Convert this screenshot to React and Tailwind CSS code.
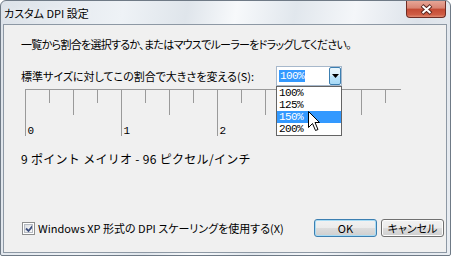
import React from "react";

const jp = "font-['Noto_Sans_CJK_JP',sans-serif] [font-feature-settings:'palt']";
const mono = "font-['Liberation_Mono',monospace]";

// ruler ticks every 24px, half marks every 48px, numbered marks every 96px
const ticks = Array.from({ length: 16 }, (_, k) => k);

const Ruler = () => (
  <svg width="377" height="47" className="block">
    <line x1="0" y1="0.5" x2="376" y2="0.5" stroke="#9a9a9a" />
    {ticks.map((k) => {
      const x = k * 24 + 0.5;
      const len = k % 4 === 0 ? 47 : k % 2 === 0 ? 26 : 14;
      return <line key={k} x1={x} y1="0" x2={x} y2={len} stroke="#9a9a9a" />;
    })}
    {["0", "1", "2", "3"].map((n, i) => (
      <text
        key={n}
        x={i * 96 + 2.5}
        y="44.5"
        fontSize="11"
        fontFamily="Liberation Mono, monospace"
        fill="#000">
        {n}
      </text>
    ))}
  </svg>
);

const Cursor = () => (
  <svg width="13" height="21" className="block">
    <path
      d="M0.5 0.5 L0.5 16.5 L4.5 12.5 L7.5 19.5 L10 18.5 L7 11.5 L11.5 11.5 Z"
      fill="#fff"
      stroke="#000"
      strokeLinejoin="miter"
    />
  </svg>
);

const CloseButton = () => (
  <div className="w-[40px] h-[17px] mr-[1px] rounded-b-[4px] border border-t-0 border-[#6e2c24] bg-[linear-gradient(#e6a596,#d98472_45%,#c34a34_50%,#cf5d45_85%,#e08a72)] flex items-center justify-center">
    <svg width="13" height="11">
      <path d="M2 1.5 L11 9.5 M11 1.5 L2 9.5" stroke="#5a2620" strokeWidth="4" />
      <path d="M2.5 2 L10.5 9 M10.5 2 L2.5 9" stroke="#fff" strokeWidth="2" />
    </svg>
  </div>
);

const Checkbox = () => (
  <div className="w-[13px] h-[13px] border border-[#8e8f8f] bg-white p-[1px] shrink-0">
    <div className="w-full h-full border border-[#b6bbc2] bg-[linear-gradient(135deg,#dcdfe3,#fbfbfb)] flex items-center justify-center">
      <svg width="9" height="9" className="block">
        <path d="M1 4.5 L3.5 7 L8 1.5" fill="none" stroke="#3d4f7e" strokeWidth="1.8" />
      </svg>
    </div>
  </div>
);

const Button = ({ children, primary }) => (
  <div
    className={`w-[63px] h-[18px] rounded-[3px] border flex items-center justify-center text-[11px] leading-none text-black ${
      primary
        ? "border-[#3c7fb1] shadow-[inset_0_0_0_1px_#a8dcf5]"
        : "border-[#707070] shadow-[inset_0_0_0_1px_#fcfcfc]"
    } bg-[linear-gradient(#f2f2f2,#ebebeb_50%,#dddddd_50%,#cfcfcf)] ${jp}`}>
    {children}
  </div>
);

const Combo = () => (
  <div className="relative w-[66px] h-[20px] border border-[#a7b8cb] bg-white flex items-center">
    <div className={`ml-[2px] h-[12px] px-[1px] bg-[#3399ff] text-white text-[11px] leading-[12px] tracking-[-0.6px] ${mono}`}>
      100%
    </div>
    <div className="ml-auto w-[12px] h-[18px] rounded-[2px] border border-[#3c7fb1] bg-[linear-gradient(#eaf6fd,#d9f0fc_50%,#bee6fd_50%,#a7d9f5)] flex items-center justify-center">
      <svg width="7" height="4" className="block">
        <path d="M0 0 L7 0 L3.5 4 Z" fill="#000" />
      </svg>
    </div>

    {/* open list */}
    <div className="absolute left-[-1px] top-[19px] w-[66px] border border-[#646464] bg-white">
      {["100%", "125%", "150%", "200%"].map((v) => (
        <div
          key={v}
          className={`h-[12px] pl-[2px] text-[11px] leading-[12px] tracking-[-0.6px] ${mono} ${
            v === "150%" ? "bg-[#3399ff] text-white" : "text-black"
          }`}>
          {v}
        </div>
      ))}
    </div>

    <div className="absolute left-[31px] top-[44px]">
      <Cursor />
    </div>
  </div>
);

export default function App() {
  return (
    <div className="w-[451px] h-[256px] flex flex-col border border-[#6f7a86] rounded-t-[6px] rounded-b-[2px] pl-[2px] pr-[3px] pb-[2px] bg-[linear-gradient(100deg,#dce2e9_0%,#eef2f6_25%,#dfe5eb_38%,#f7f9fb_48%,#e1e7ed_60%,#f4f6f9_72%,#dde3ea_85%,#e9edf2_100%)] overflow-hidden">
      {/* Title bar */}
      <div className="h-[23px] flex items-start shrink-0">
        <div
          className={`pl-[1px] pt-[4px] text-[11px] leading-[16px] text-black [text-shadow:0_0_6px_#fff] ${jp}`}>
          カスタム DPI 設定
        </div>
        <div className="ml-auto">
          <CloseButton />
        </div>
      </div>

      {/* Client area */}
      <div className={`flex-1 flex flex-col border border-[#8d98a4] bg-[#f0f0f0] text-[11px] text-black ${jp}`}>
        <div className="pl-[17px] mt-[11px] h-[16px] leading-[16px] tracking-[-0.7px]">
          一覧から割合を選択するか、またはマウスでルーラーをドラッグしてください。
        </div>

        <div className="pl-[17px] mt-[14px] flex items-center h-[20px]">
          <div className="w-[255px] leading-[16px]">
            標準サイズに対してこの割合で大きさを変える(S):
          </div>
          <Combo />
        </div>

        <div className="pl-[21px] mt-[3px]">
          <Ruler />
        </div>

        <div className="pl-[17px] mt-[15px] h-[16px] leading-[16px] text-[12px] tracking-[0.3px] [font-feature-settings:normal]">
          9 ポイント メイリオ - 96 ピクセル/インチ
        </div>

        <div className="mt-auto pb-[15px] pl-[18px] pr-[2px] flex items-center h-[33px]">
          <Checkbox />
          <div className="ml-[3px] leading-[16px]">
            Windows XP 形式の DPI スケーリングを使用する(X)
          </div>
          <div className="ml-auto flex gap-[4px]">
            <Button primary>OK</Button>
            <Button>キャンセル</Button>
          </div>
        </div>
      </div>
    </div>
  );
}
